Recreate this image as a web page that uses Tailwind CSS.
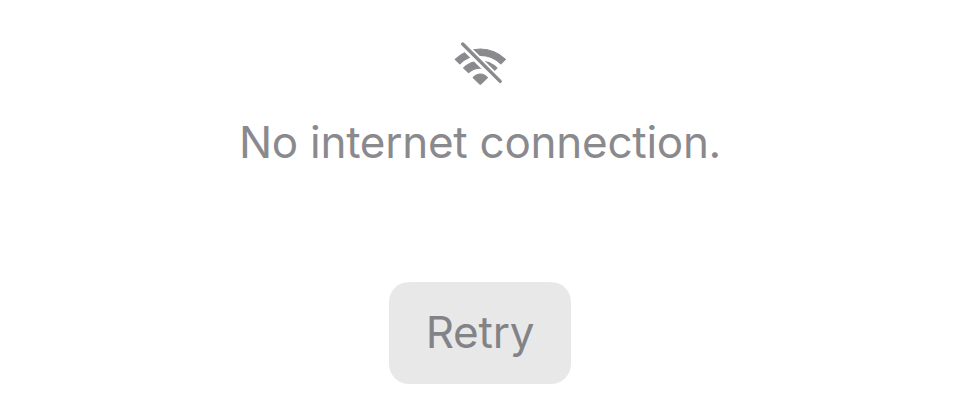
<!DOCTYPE html>
<html lang="en">
<head>
<meta charset="utf-8">
<title>No internet connection</title>
<script src="https://cdn.jsdelivr.net/npm/@tailwindcss/browser@4"></script>
</head>
<body class="bg-white">
<main class="flex h-[420px] w-[960px] flex-col items-center overflow-hidden pt-10 font-['Inter',sans-serif] text-[#8a8a8e]">
  <svg class="h-12 w-14 shrink-0" viewBox="452.5 40 56 48" fill="none" stroke="currentColor" aria-hidden="true">
    <mask id="gap" maskUnits="userSpaceOnUse" x="452" y="40" width="57" height="48">
      <rect x="452" y="40" width="57" height="48" fill="white" stroke="none"/>
      <path d="M456 37.3 506 87.3" stroke="black" stroke-width="8"/>
    </mask>
    <g mask="url(#gap)" fill="currentColor" stroke-width="1.2" stroke-linejoin="round">
      <path d="M455.7 59.4A35.5 35.5 0 0 1 505.9 59.4L501.3 63.8A29.2 29.2 0 0 0 460.3 63.8Z"/>
      <path d="M464.2 68A23.2 23.2 0 0 1 497.4 68L492.5 72.6A17.3 17.3 0 0 0 469.1 72.6Z"/>
    </g>
    <path d="M473.7 77.6Q476.6 74 480.8 74T487.9 77.6L481.2 84.1Q480.8 84.4 480.4 84.1Z" fill="currentColor" stroke-width="1.2" stroke-linejoin="round"/>
    <path d="M463.2 44 500.7 81.4" stroke-width="3.4" stroke-linecap="round"/>
  </svg>
  <p class="mt-[26px] h-14 whitespace-nowrap text-[44px] leading-[56px] tracking-[-0.27px]">No internet connection.</p>
  <button class="mt-[112px] flex h-[102px] w-[182px] shrink-0 items-center justify-center rounded-[20px] bg-[#e8e8e8] pb-0.5 text-[44px] leading-[56px] tracking-[-0.2px] text-[#838387]">Retry</button>
</main>
</body>
</html>
